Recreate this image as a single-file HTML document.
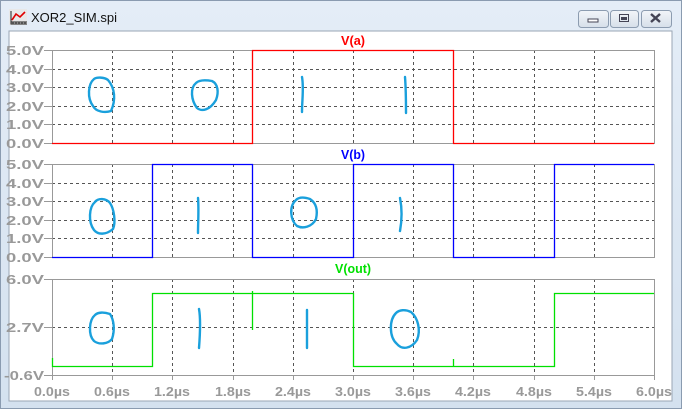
<!DOCTYPE html>
<html><head><meta charset="utf-8"><style>
html,body{margin:0;padding:0;width:682px;height:409px;overflow:hidden;background:#dce7f3}
svg{display:block}
text{font-family:"Liberation Sans",sans-serif;font-weight:bold}
</style></head><body>
<svg width="682" height="409" viewBox="0 0 682 409" xmlns="http://www.w3.org/2000/svg">
<defs>
<linearGradient id="tb" x1="0" y1="0" x2="0" y2="1"><stop offset="0" stop-color="#e4edf7"/><stop offset="1" stop-color="#d4e1ef"/></linearGradient>
<linearGradient id="bt" x1="0" y1="0" x2="0" y2="1"><stop offset="0" stop-color="#f2f5f9"/><stop offset="1" stop-color="#d6dfe9"/></linearGradient>
</defs>
<rect x="0" y="0" width="682" height="409" fill="url(#tb)"/>
<rect x="0.5" y="0.5" width="681" height="408" fill="none" stroke="#8a9bb0"/>
<!-- icon -->
<rect x="9" y="9" width="18" height="16" fill="#e8e8e8"/>
<path d="M11 11V24H27" stroke="#222" fill="none"/>
<path d="M11 22h16M13 22v2M16 22v2M19 22v2M22 22v2M25 22v2" stroke="#222" stroke-width="1"/>
<path d="M12 20L16 14L20 17L25 12" stroke="#e00000" stroke-width="1.6" fill="none"/>
<text x="31" y="22" font-size="13" font-weight="normal" fill="#111" style="font-weight:normal">XOR2_SIM.spi</text>
<!-- buttons -->
<rect x="578.5" y="10.5" width="30" height="17" rx="3" fill="url(#bt)" stroke="#8c9cb0"/>
<rect x="588" y="19" width="10" height="3" fill="#fff" stroke="#445" stroke-width="1"/>
<rect x="610.5" y="10.5" width="28" height="17" rx="3" fill="url(#bt)" stroke="#8c9cb0"/>
<rect x="619.5" y="14.5" width="9" height="7" fill="none" stroke="#445"/><rect x="621" y="17" width="6" height="3" fill="#445"/>
<rect x="641.5" y="10.5" width="30" height="17" rx="3" fill="url(#bt)" stroke="#8c9cb0"/>
<path d="M651 14l9 8M660 14l-9 8" stroke="#445" stroke-width="2.4"/>
<!-- client -->
<rect x="9" y="31" width="663" height="370" fill="#fff" stroke="#9aa6b4"/>
<g font-size="13" fill="#999" text-anchor="end">
<text x="44" y="55" textLength="38" lengthAdjust="spacingAndGlyphs">5.0V</text>
<text x="44" y="74" textLength="38" lengthAdjust="spacingAndGlyphs">4.0V</text>
<text x="44" y="92" textLength="38" lengthAdjust="spacingAndGlyphs">3.0V</text>
<text x="44" y="111" textLength="38" lengthAdjust="spacingAndGlyphs">2.0V</text>
<text x="44" y="129" textLength="38" lengthAdjust="spacingAndGlyphs">1.0V</text>
<text x="44" y="148" textLength="38" lengthAdjust="spacingAndGlyphs">0.0V</text>
<text x="44" y="169" textLength="38" lengthAdjust="spacingAndGlyphs">5.0V</text>
<text x="44" y="188" textLength="38" lengthAdjust="spacingAndGlyphs">4.0V</text>
<text x="44" y="206" textLength="38" lengthAdjust="spacingAndGlyphs">3.0V</text>
<text x="44" y="225" textLength="38" lengthAdjust="spacingAndGlyphs">2.0V</text>
<text x="44" y="243" textLength="38" lengthAdjust="spacingAndGlyphs">1.0V</text>
<text x="44" y="262" textLength="38" lengthAdjust="spacingAndGlyphs">0.0V</text>
<text x="44" y="284" textLength="38" lengthAdjust="spacingAndGlyphs">6.0V</text>
<text x="44" y="332" textLength="38" lengthAdjust="spacingAndGlyphs">2.7V</text>
<text x="44" y="380" textLength="40" lengthAdjust="spacingAndGlyphs">-0.6V</text>
</g>
<g font-size="13" fill="#999" text-anchor="middle">
<text x="52" y="396" textLength="36" lengthAdjust="spacingAndGlyphs">0.0µs</text>
<text x="112" y="396" textLength="36" lengthAdjust="spacingAndGlyphs">0.6µs</text>
<text x="172" y="396" textLength="36" lengthAdjust="spacingAndGlyphs">1.2µs</text>
<text x="233" y="396" textLength="36" lengthAdjust="spacingAndGlyphs">1.8µs</text>
<text x="293" y="396" textLength="36" lengthAdjust="spacingAndGlyphs">2.4µs</text>
<text x="353" y="396" textLength="36" lengthAdjust="spacingAndGlyphs">3.0µs</text>
<text x="413" y="396" textLength="36" lengthAdjust="spacingAndGlyphs">3.6µs</text>
<text x="473" y="396" textLength="36" lengthAdjust="spacingAndGlyphs">4.2µs</text>
<text x="534" y="396" textLength="36" lengthAdjust="spacingAndGlyphs">4.8µs</text>
<text x="594" y="396" textLength="36" lengthAdjust="spacingAndGlyphs">5.4µs</text>
<text x="654" y="396" textLength="36" lengthAdjust="spacingAndGlyphs">6.0µs</text>
</g>
<g font-size="13" text-anchor="middle">
<text x="353" y="45" fill="#ff0000" textLength="24" lengthAdjust="spacingAndGlyphs">V(a)</text>
<text x="353" y="159" fill="#0000ff" textLength="24" lengthAdjust="spacingAndGlyphs">V(b)</text>
<text x="353" y="273" fill="#00e000" textLength="36" lengthAdjust="spacingAndGlyphs">V(out)</text>
</g>
<!-- grid dashed -->
<g stroke="#555" stroke-dasharray="3,3" stroke-width="1">
<path d="M112.5 50V143M172.5 50V143M233.5 50V143M293.5 50V143M353.5 50V143M413.5 50V143M473.5 50V143M534.5 50V143M594.5 50V143"/>
<path d="M52 69.5H654M52 87.5H654M52 106.5H654M52 124.5H654"/>
<path d="M112.5 164V257M172.5 164V257M233.5 164V257M293.5 164V257M353.5 164V257M413.5 164V257M473.5 164V257M534.5 164V257M594.5 164V257"/>
<path d="M52 183.5H654M52 201.5H654M52 220.5H654M52 238.5H654"/>
<path d="M112.5 279V375M172.5 279V375M233.5 279V375M293.5 279V375M353.5 279V375M413.5 279V375M473.5 279V375M534.5 279V375M594.5 279V375"/>
<path d="M52 327.5H654"/>
</g>
<!-- frames -->
<g stroke="#999" fill="none">
<rect x="52.5" y="50.5" width="602" height="93"/>
<rect x="52.5" y="164.5" width="602" height="93"/>
<rect x="52.5" y="279.5" width="602" height="96"/>
<path d="M44 50.5h8M44 69.5h8M44 87.5h8M44 106.5h8M44 124.5h8M44 143.5h8"/>
<path d="M44 164.5h8M44 183.5h8M44 201.5h8M44 220.5h8M44 238.5h8M44 257.5h8"/>
<path d="M44 279.5h8M44 327.5h8M44 375.5h8"/>
<path d="M52.5 375v5M112.5 375v5M172.5 375v5M233.5 375v5M293.5 375v5M353.5 375v5M413.5 375v5M473.5 375v5M534.5 375v5M594.5 375v5M654.5 375v5"/>
</g>
<!-- traces -->
<path d="M52 143.5H252.5V50.5H453.5V143.5H654" stroke="#ff0000" stroke-width="1.3" fill="none"/>
<path d="M52 257.5H152.5V164.5H252.5V257.5H353.5V164.5H453.5V257.5H554.5V164.5H654" stroke="#0000ff" stroke-width="1.3" fill="none"/>
<path d="M52.5 358V366.5H152.5V293.5H353.5V366.5H554.5V293.5H654" stroke="#00e000" stroke-width="1.3" fill="none"/>
<path d="M252.5 291V330M453.5 359V366" stroke="#00e000" stroke-width="1.3"/>
<!-- scribbles -->
<g stroke="#1aa0dc" stroke-width="2.4" fill="none" stroke-linecap="round" stroke-linejoin="round">
<path d="M94 79C88 84 87 98 93 106C96 112 105 113 111 111C116 100 115 88 108 80C104 77 97 77 94 79Z"/>
<path d="M196 83C190 88 191 100 197 108C202 112 210 110 216 100C219 92 218 84 212 81C206 80 199 80 196 83Z"/>
<path d="M302 77C304 88 302 100 302 112"/>
<path d="M405 77C406 90 406 100 406 113"/>
<path d="M95 202C89 207 88 222 94 230C98 235 106 235 113 229C116 222 114 209 110 203C106 198 98 198 95 202Z"/>
<path d="M198 198C199 210 198 222 198 233"/>
<path d="M296 200C289 206 290 220 297 226C303 229 312 227 316 219C318 210 316 203 310 199C304 197 299 197 296 200Z"/>
<path d="M400 198C402 208 402 220 400 231"/>
<path d="M95 315C89 320 88 335 94 341C99 345 108 344 112 339C115 330 114 320 110 314C104 312 98 312 95 315Z"/>
<path d="M199 309C201 320 200 335 199 348"/>
<path d="M307 310V348"/>
<path d="M396 313C389 320 389 337 397 344C402 350 411 349 417 340C421 330 418 318 411 312C405 309 399 310 396 313Z"/>
</g>
</svg>
</body></html>
